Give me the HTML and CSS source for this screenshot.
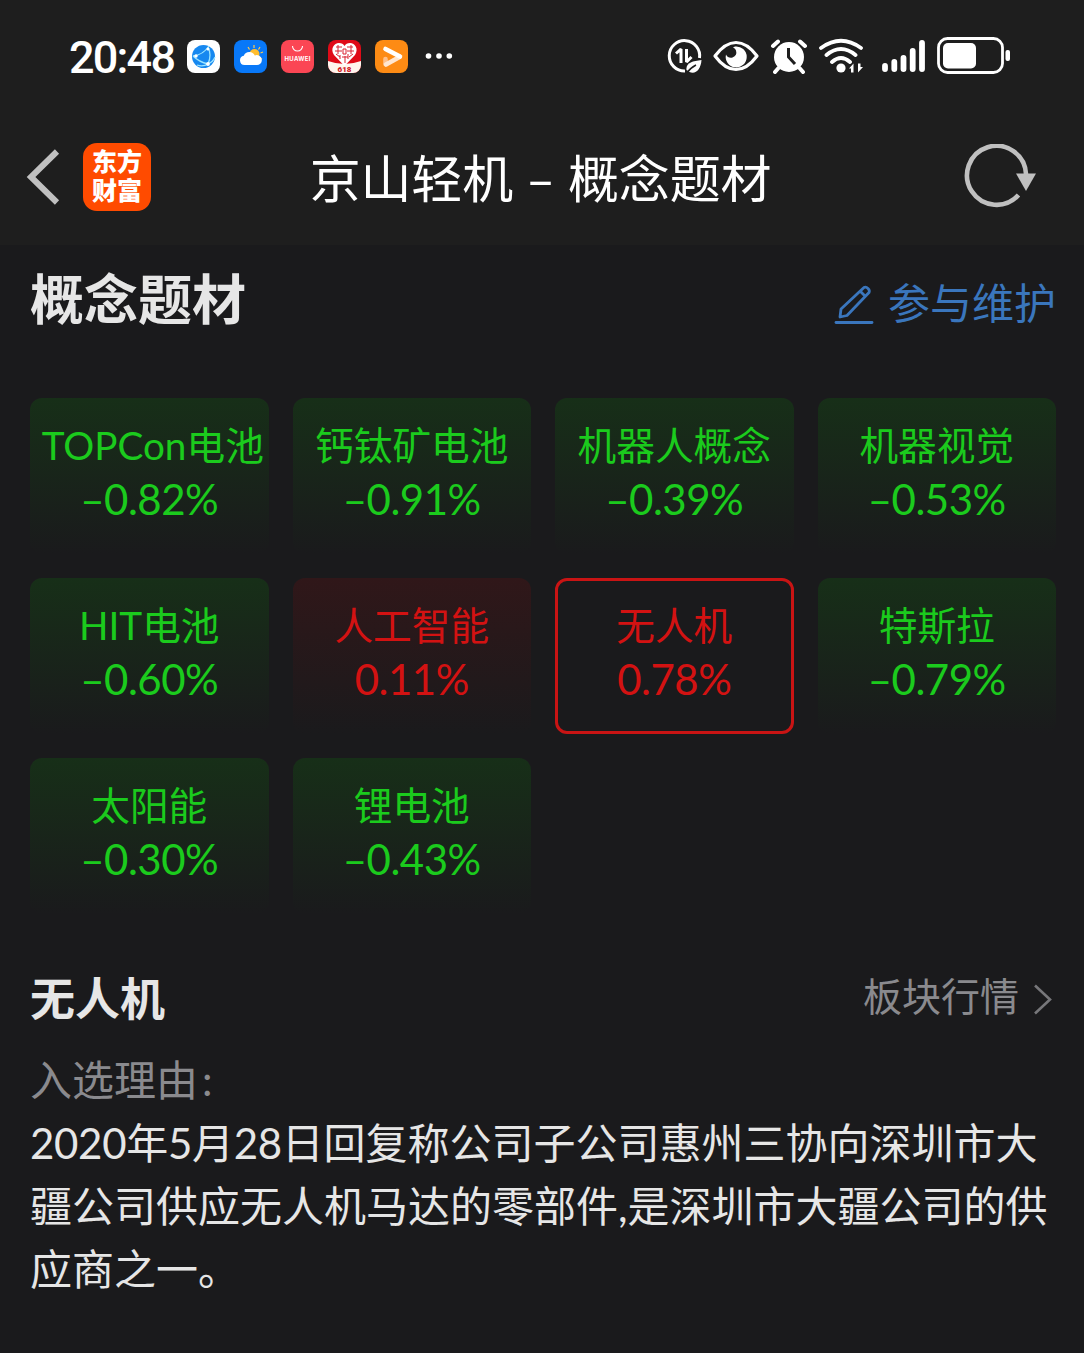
FILE: index.html
```
<!DOCTYPE html>
<html lang="zh-CN">
<head>
  <meta charset="UTF-8">
  <meta name="viewport" content="width=device-width, initial-scale=1.0">
  <title>京山轻机 – 概念题材</title>
  <link rel="stylesheet" href="styles.css">
</head>
<body>
  <header class="top">
    <div class="status-bar">
      <div class="time">20:48</div>
      <div class="apps">
        <svg width="33" height="33" viewBox="0 0 33 33">
          <rect width="33" height="33" rx="8" fill="#fff"/>
          <circle cx="16.5" cy="16.5" r="11.5" fill="#1688f0"/>
          <path d="M6 16Q16 15 22 6M6 16Q12 22 21 24M21 24Q25 15 21 7M10 25Q16 27 21 24M21 24Q26 22 28 17" fill="none" stroke="#9be4ff" stroke-width="1.3"/>
          <circle cx="9" cy="16" r="1.7" fill="#fff"/>
          <circle cx="21" cy="9" r="1.5" fill="#fff"/>
          <circle cx="21" cy="24" r="1.9" fill="#fff"/>
        </svg>
        <svg width="33" height="33" viewBox="0 0 33 33">
          <rect width="33" height="33" rx="8" fill="#0878f8"/>
          <path d="M20 5v3M26 7l-1.5 2.5M14 7l1.5 2.5M29 12l-2.5 1M28 19l-2-1" stroke="#ffc94d" stroke-width="1.2"/>
          <circle cx="20.5" cy="14" r="5" fill="#ffbd2e"/>
          <path d="M10.500 25a4.700 4.700 0 0 1-.7-9.300 6 6 0 0 1 11-.2A5 5 0 1 1 22 25z" fill="#fff"/>
        </svg>
        <svg width="33" height="33" viewBox="0 0 33 33">
          <rect width="33" height="33" rx="8" fill="#fb4654"/>
          <path d="M11.5 6a5 5 0 0 0 10 0" fill="none" stroke="#fff" stroke-width="1.1"/>
          <text class="huawei" x="16.5" y="21" text-anchor="middle" textLength="26">HUAWEI</text>
        </svg>
        <svg width="33" height="33" viewBox="0 0 33 33">
          <rect width="33" height="33" rx="8" fill="#df0b18"/>
          <path d="M0 21q16.5 6 33 0v4a8 8 0 0 1-8 8H8a8 8 0 0 1-8-8z" fill="#fff5ee"/>
          <path d="M16.5 26L6 15C2 9 6 3 11 3q4 0 5.5 3Q18 3 22 3c5 0 9 6 5 12z" fill="#fff"/>
          <path d="M8 7h6M7 11h7M10 5v9M12 15v4M19 7h6M19 11h7M23 5v9M15 9h3v5h-3zM14 17h6M17 16v7M20 14v5M8 14l4 3M25 14l-4 3" fill="none" stroke="#d92532" stroke-width="1"/>
          <text class="sale" x="16.5" y="31.5" text-anchor="middle">618</text>
        </svg>
        <svg width="33" height="33" viewBox="0 0 33 33">
          <rect width="33" height="33" rx="8" fill="#fd8b14"/>
          <path d="M10.5 24v-5" stroke="#ffc08a" stroke-width="4.6" stroke-linecap="round"/>
          <path d="M11 24.500L24.500 17" stroke="#ffe6d0" stroke-width="4.6" stroke-linecap="round"/>
          <path d="M10.500 9L25 16.500" stroke="#fff" stroke-width="4.6" stroke-linecap="round"/>
        </svg>
      </div>
      <svg class="more" width="28" height="8" viewBox="0 0 28 8" fill="#fff">
        <circle cx="3.5" cy="4" r="2.8"/><circle cx="14" cy="4" r="2.8"/><circle cx="24.300" cy="4" r="2.8"/>
      </svg>
      <div class="system">
        <svg width="36" height="36" viewBox="0 0 36 36">
          <path d="M18 33A15.200 15.200 0 1 1 32.500 20" fill="none" stroke="#fff" stroke-width="3"/>
          <path d="M9 15.500l5-4.500v14M19.500 11v13l5-5" fill="none" stroke="#fff" stroke-width="3" stroke-linejoin="bevel"/>
          <path d="M19.500 32c-1-7 6-9 15-10-.5 9-6 15-12 12z" fill="#fff"/>
          <path d="M19 36q4-6 10-9" fill="none" stroke="#1e1e1e" stroke-width="1.5"/>
        </svg>
        <svg width="46" height="36" viewBox="0 0 46 36">
          <path d="M2 18Q12 4.500 23 4.500T44 18Q34 31.500 23 31.500T2 18z" fill="none" stroke="#fff" stroke-width="3.2" stroke-linejoin="round"/>
          <path d="M22 8.500a10.500 10.500 0 1 1-9 8q2 4 6.500 3 5-2 3.500-7-.5-2-3-3z" fill="#fff"/>
        </svg>
        <svg class="alarm" width="38" height="36" viewBox="0 0 38 36">
          <circle cx="19" cy="19" r="15" fill="#fff"/>
          <path d="M3 8l5-4.500M35 8l-5-4.500M8.500 30L5 34M29.500 30l3.500 4" stroke="#fff" stroke-width="4" stroke-linecap="round"/>
          <path d="M18.500 10v9l6.500 7" fill="none" stroke="#1e1e1e" stroke-width="3"/>
        </svg>
        <svg width="46" height="36" viewBox="0 0 46 36">
          <path d="M3 10q20-14.500 40 0M8.500 17q14.500-12 29 0M14 24q9-8 18 0" fill="none" stroke="#fff" stroke-width="3.800" stroke-linecap="round"/>
          <circle cx="23" cy="30" r="4.600" fill="#fff"/>
          <path d="M31 30.500l4.500-5v9h-2.500v-4zM45 29l-5 5.500v-9h2.500V29z" fill="#fff"/>
        </svg>
        <svg class="signal" width="44" height="36" viewBox="0 0 44 36">
          <path d="M3 28v3M12.300 24V31M21.500 20v11M30.700 13v18M40 5v26" stroke="#fff" stroke-width="5.800" stroke-linecap="round"/>
        </svg>
        <svg class="battery" width="74" height="38" viewBox="0 0 74 38">
          <rect x="1.5" y="1.500" width="64" height="34" rx="9" fill="none" stroke="#fff" stroke-width="2.8"/>
          <rect x="6" y="6" width="33" height="25.500" rx="5" fill="#fff"/>
          <rect x="68.500" y="13" width="4.500" height="11" rx="2" fill="#fff"/>
        </svg>
      </div>
    </div>

    <nav class="nav">
      <svg class="back" width="36" height="56" viewBox="0 0 36 56">
        <path d="M32 2.500L6 28l26 25.500" fill="none" stroke="#c0c0c0" stroke-width="6"/>
      </svg>
      <div class="logo">东方<br>财富</div>
      <h1 class="nav-title">京山轻机 – 概念题材</h1>
      <svg class="refresh" width="72" height="66" viewBox="0 0 72 66">
        <path d="M54.500 51A29.500 29.500 0 1 1 62 30" fill="none" stroke="#c0c0c0" stroke-width="4.6"/>
        <path d="M52 29.500h20l-10 17.500z" fill="#c0c0c0"/>
      </svg>
    </nav>
  </header>

  <main class="content">
    <div class="heading">
      <h2>概念题材</h2>
      <a class="edit">
        <svg width="40" height="46" viewBox="0 0 40 46" fill="none" stroke="#3a76bd" stroke-width="2.8">
          <path d="M6 37l1-8L30 7.500q2-1 4 1t1 4L13 35.500zM26 11l5.500 5.500" stroke-linejoin="round"/>
          <path d="M2 42.500h36" stroke-linecap="round"/>
        </svg>
        <span>参与维护</span>
      </a>
    </div>

    <div class="tiles">
      <div class="tile"><div class="wide">TOPCon电池</div><div class="rate">–0.82%</div></div>
      <div class="tile"><div>钙钛矿电池</div><div class="rate">–0.91%</div></div>
      <div class="tile"><div>机器人概念</div><div class="rate">–0.39%</div></div>
      <div class="tile"><div>机器视觉</div><div class="rate">–0.53%</div></div>
      <div class="tile"><div>HIT电池</div><div class="rate">–0.60%</div></div>
      <div class="tile up"><div>人工智能</div><div class="rate">0.11%</div></div>
      <div class="tile up active"><div>无人机</div><div class="rate">0.78%</div></div>
      <div class="tile"><div>特斯拉</div><div class="rate">–0.79%</div></div>
      <div class="tile"><div>太阳能</div><div class="rate">–0.30%</div></div>
      <div class="tile"><div>锂电池</div><div class="rate">–0.43%</div></div>
    </div>

    <div class="section-head">
      <h3>无人机</h3>
      <a class="market">
        <span>板块行情</span>
        <svg width="20" height="32" viewBox="0 0 20 32">
          <path d="M2 2.500L17 16.500 2 30.500" fill="none" stroke="#77777a" stroke-width="2.6"/>
        </svg>
      </a>
    </div>
    <div class="reason">
      <div class="label">入选理由<span class="colon">:</span></div>
      <p><span class="date">2020年5月28日</span>回复称公司子公司惠州三协向深圳市大<br>疆公司供应无人机马达的零部件,是深圳市大疆公司的供<br>应商之一。</p>
    </div>
  </main>
</body>
</html>
```
FILE: styles.css
```
* {
  box-sizing: border-box;
}

body {
  margin: 0;
  background: #1a1a1c;
  color: #e6e6e6;
  font-family: Lato, "Noto Sans CJK SC", sans-serif;
  min-height: 100vh;
}

h1, h2, h3, p {
  margin: 0;
}

svg {
  display: block;
  flex: none;
}

.top {
  height: 245px;
  background: #1e1e1e;
}

.status-bar {
  height: 112px;
  display: flex;
  align-items: center;
  padding: 0 73px 0 69px;
}

.time {
  width: 118px;
  padding-top: 4px;
  font: 500 45px/56px Roboto, sans-serif;
  letter-spacing: -1.8px;
  color: #fff;
}

.apps {
  display: flex;
  gap: 14px;
}

.huawei {
  font: 700 6px Inter, sans-serif;
  fill: #fff;
}

.sale {
  font: 900 8px Roboto, sans-serif;
  fill: #cf1723;
}

.more {
  margin-left: 17px;
}

.system {
  margin-left: auto;
  display: flex;
  align-items: center;
  gap: 10px;
}

.alarm,
.battery {
  margin-left: 1px;
}

.signal {
  margin-left: 8px;
}

.nav {
  height: 133px;
  display: flex;
  align-items: center;
  padding: 0 48px 3px 25px;
}

.logo {
  width: 68px;
  height: 68px;
  margin-left: 22px;
  padding-top: 3px;
  border-radius: 14px;
  background: #ff4b00;
  color: #fff;
  font: 900 25px/29px "Noto Sans CJK SC", sans-serif;
  text-align: center;
}

.nav-title {
  flex: 1;
  margin-right: 34px;
  padding-top: 3px;
  color: #fff;
  font-size: 51px;
  font-weight: 400;
  line-height: 70px;
  letter-spacing: -0.2px;
  text-align: center;
}

.content {
  padding: 15px 28px 0 30px;
}

.heading,
.section-head {
  display: flex;
  justify-content: space-between;
  align-items: center;
}

.heading {
  height: 80px;
}

h2 {
  font-size: 54px;
  line-height: 80px;
}

.edit {
  display: flex;
  align-items: center;
  gap: 14px;
  padding-top: 5px;
  color: #3a76bd;
  font-size: 42px;
  line-height: 60px;
}

.tiles {
  display: grid;
  grid-template-columns: repeat(4, 1fr);
  grid-auto-rows: 156px;
  gap: 24px;
  margin-top: 58px;
}

.tile {
  padding-top: 20px;
  border-radius: 12px;
  background: linear-gradient(#172f18, #1a1a1c);
  color: #1bcb1d;
  font-size: 38.7px;
  line-height: 55px;
  text-align: center;
  white-space: nowrap;
}

.wide {
  padding-left: 7px;
}

.rate {
  font-size: 42px;
  line-height: 53px;
  letter-spacing: -0.5px;
}

.up {
  background: linear-gradient(#301719, #1a1a1c);
  color: #d31212;
}

.active {
  padding-top: 17px;
  border: 3px solid #c91414;
  background: none;
}

.section-head {
  height: 70px;
  margin-top: 50px;
}

h3 {
  font-size: 45px;
  line-height: 70px;
}

.market {
  display: flex;
  align-items: center;
  gap: 14px;
  padding-right: 3px;
  color: #8a8a8e;
  font-size: 39px;
  line-height: 60px;
}

.market span {
  padding-bottom: 6px;
}

.reason {
  margin-top: 15px;
  font-size: 42px;
  line-height: 63px;
  white-space: nowrap;
}

.label {
  color: #8a8a8e;
}

.colon {
  margin-left: 4px;
}

.date {
  letter-spacing: -0.3px;
}
```
